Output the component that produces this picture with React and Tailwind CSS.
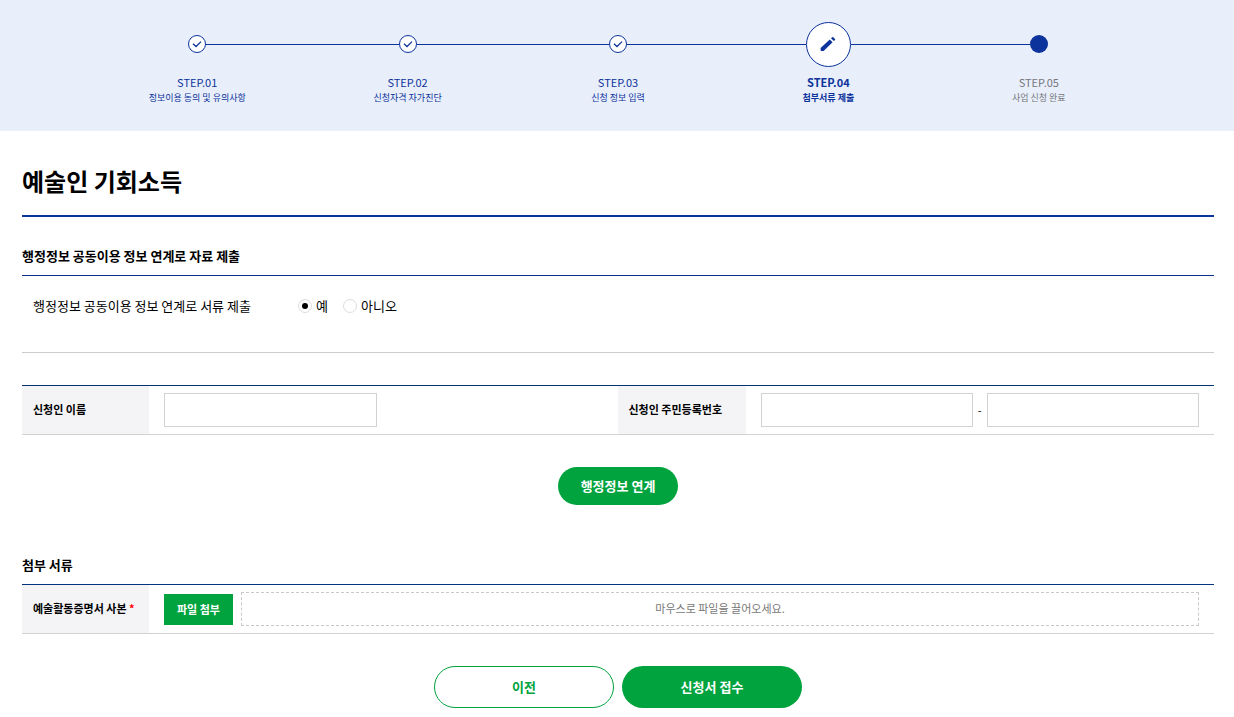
import React, { useState } from 'react';
import clsx from 'clsx';

const steps = [
  { no: 'STEP.01', label: '정보이용 동의 및 유의사항', status: 'done' },
  { no: 'STEP.02', label: '신청자격 자가진단', status: 'done' },
  { no: 'STEP.03', label: '신청 정보 입력', status: 'done' },
  { no: 'STEP.04', label: '첨부서류 제출', status: 'current' },
  { no: 'STEP.05', label: '사업 신청 완료', status: 'todo' },
];

const StepMark = ({ status }) => {
  if (status === 'current') {
    return (
      <span className="flex size-[45px] shrink-0 items-center justify-center rounded-full border border-[#0c329c] bg-white text-[#0c329c]">
        <svg viewBox="0 0 16 16" className="size-4" fill="currentColor" aria-hidden="true">
          <path d="M.6 12 9.8 3.4 12.6 6.2 3.6 15H1.4Q.6 15 .6 14.2z" />
          <path d="M11 2.3 12.1 1.2Q12.7.7 13.3 1.2L15 2.9Q15.5 3.5 15 4L13.8 5.1z" />
        </svg>
      </span>
    );
  }
  if (status === 'todo') {
    return <span className="size-[18px] shrink-0 rounded-full bg-[#0c329c]" />;
  }
  return (
    <span className="flex size-[18px] shrink-0 items-center justify-center rounded-full border border-[#0c329c] bg-white text-[#0c329c]">
      <svg
        viewBox="0 0 10 10"
        className="size-[10px]"
        fill="none"
        stroke="currentColor"
        strokeWidth="1.3"
        aria-hidden="true"
      >
        <path d="M1 4.8 4 7.5 9 2.6" />
      </svg>
    </span>
  );
};

const StepBar = () => (
  <header className="bg-[#e8effb] pt-[22px] pr-5 pb-[25px] pl-[22px]">
    <ol className="grid grid-cols-5 px-[70px]">
      {steps.map((step, index) => (
        <li
          key={step.no}
          className={clsx(
            'text-center',
            step.status === 'todo' ? 'text-[#76777c]' : 'text-[#0c329c]',
            step.status === 'current' && 'font-bold'
          )}
        >
          <div className="flex h-11 items-center">
            <span className={clsx('h-px flex-1', index > 0 && 'bg-[#0c329c]')} />
            <StepMark status={step.status} />
            <span className={clsx('h-px flex-1', index < steps.length - 1 && 'bg-[#0c329c]')} />
          </div>
          <p className="mt-2 text-[11px] leading-4">{step.no}</p>
          <p className="text-[9px] leading-4">{step.label}</p>
        </li>
      ))}
    </ol>
  </header>
);

const App = () => {
  const [linked, setLinked] = useState('yes');

  return (
    <div className="bg-white font-['Noto_Sans_CJK_KR',sans-serif] text-black">
      <StepBar />

      <main className="pr-5 pb-2 pl-[22px]">
        <h1 className="border-b-2 border-[#0c329c] pt-8 pb-4 text-2xl leading-9 font-bold">
          예술인 기회소득
        </h1>

        {/* 행정정보 공동이용 */}
        <section className="mt-[30px]">
          <h2 className="border-b border-[#0c2f8c] pb-[10px] text-[13px] leading-[18px] font-bold">
            행정정보 공동이용 정보 연계로 자료 제출
          </h2>
          <fieldset className="flex items-center border-b border-[#cccccc] px-[11px] pt-5 pb-9 text-[13px] leading-5">
            <span id="link-label" className="w-[265px]">
              행정정보 공동이용 정보 연계로 서류 제출
            </span>
            <div role="radiogroup" aria-labelledby="link-label" className="flex gap-[15px]">
              {[
                { value: 'yes', label: '예' },
                { value: 'no', label: '아니오' },
              ].map((option) => (
                <label key={option.value} className="flex items-center gap-1">
                  <input
                    type="radio"
                    name="link"
                    value={option.value}
                    checked={linked === option.value}
                    onChange={() => setLinked(option.value)}
                    className="grid size-[14px] appearance-none place-content-center rounded-full border border-[#dddddd] bg-white before:size-1.5 before:rounded-full checked:before:bg-black"
                  />
                  {option.label}
                </label>
              ))}
            </div>
          </fieldset>
        </section>

        {/* 신청인 정보 */}
        <section className="mt-8">
          <table className="w-full table-fixed border-t border-b border-t-[#06336f] border-b-[#d2d2d2] text-[11px]">
            <colgroup>
              <col className="w-[127px]" />
              <col />
              <col className="w-[128px]" />
              <col />
            </colgroup>
            <tbody>
              <tr>
                <th className="bg-[#f4f4f7] px-[11px] pb-0.5 text-left font-bold">
                  <label htmlFor="name">신청인 이름</label>
                </th>
                <td className="px-[15px] py-[7px]">
                  <input
                    id="name"
                    type="text"
                    className="block h-[34px] w-[calc(50%-6px)] border border-[#d2d2d2] px-2"
                  />
                </td>
                <th className="bg-[#f4f4f7] px-[11px] pb-0.5 text-left font-bold">
                  <label htmlFor="rrn-front">신청인 주민등록번호</label>
                </th>
                <td className="px-[15px] py-[7px]">
                  <div className="flex items-center">
                    <input
                      id="rrn-front"
                      type="text"
                      className="h-[34px] min-w-0 flex-1 border border-[#d2d2d2] px-2"
                    />
                    <span className="w-[14px] text-center">-</span>
                    <input
                      type="password"
                      aria-label="주민등록번호 뒷자리"
                      className="h-[34px] min-w-0 flex-1 border border-[#d2d2d2] px-2"
                    />
                  </div>
                </td>
              </tr>
            </tbody>
          </table>
          <div className="mt-8 flex justify-center">
            <button
              type="button"
              className="h-[38px] w-[120px] rounded-full bg-[#00a33e] text-[13px] font-bold text-white"
            >
              행정정보 연계
            </button>
          </div>
        </section>

        {/* 첨부 서류 */}
        <section className="mt-[51px]">
          <h2 className="pb-[10px] text-[13px] leading-[18px] font-bold">첨부 서류</h2>
          <table className="w-full table-fixed border-t border-b border-t-[#06337e] border-b-[#d2d2d2] text-[11px]">
            <colgroup>
              <col className="w-[127px]" />
              <col />
            </colgroup>
            <tbody>
              <tr>
                <th className="bg-[#f4f4f7] px-[11px] pb-0.5 text-left font-bold">
                  예술활동증명서 사본 <span className="text-[#ff0000]">*</span>
                </th>
                <td className="px-[15px] py-[7px]">
                  <div className="flex items-center gap-2">
                    <button type="button" className="h-[31px] w-[69px] bg-[#00a33e] font-bold text-white">
                      파일 첨부
                    </button>
                    <div className="flex h-[34px] flex-1 items-center justify-center border border-dashed border-[#c8c8c8] pb-0.5 text-[#777777]">
                      마우스로 파일을 끌어오세요.
                    </div>
                  </div>
                </td>
              </tr>
            </tbody>
          </table>
        </section>

        <div className="mt-8 flex justify-center gap-2 text-[13px] font-bold">
          <button
            type="button"
            className="h-[42px] w-[180px] rounded-full border border-[#00a33e] bg-white text-[#00a33e]"
          >
            이전
          </button>
          <button type="submit" className="h-[42px] w-[180px] rounded-full bg-[#00a33e] text-white">
            신청서 접수
          </button>
        </div>
      </main>
    </div>
  );
};

export default App;
